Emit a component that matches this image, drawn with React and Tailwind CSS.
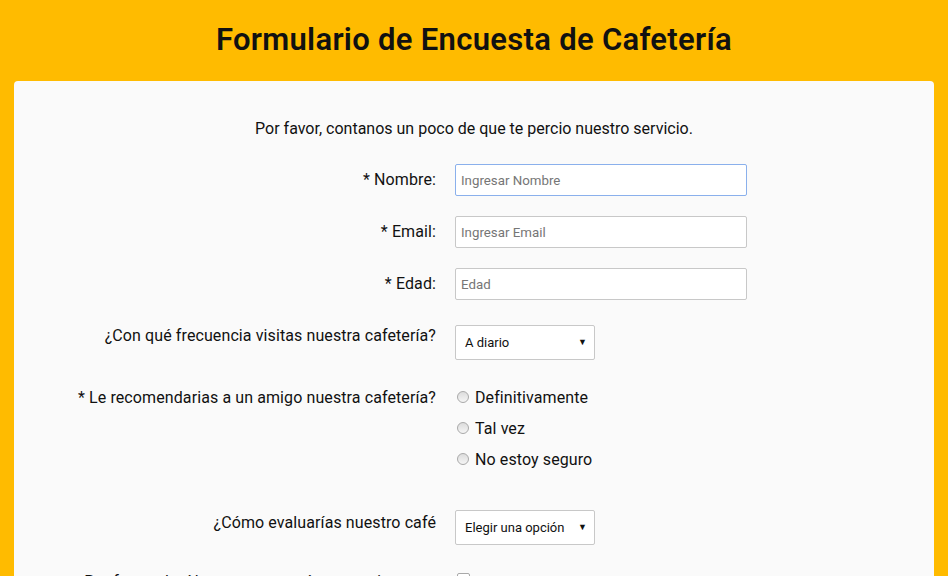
import React from "react";

function Arrow() {
  return (
    <span className="pointer-events-none absolute right-[8px] top-1/2 -translate-y-1/2 text-[9px] text-[#111]">▼</span>
  );
}

export default function App() {
  const font = { fontFamily: "Roboto, 'Noto Sans', sans-serif" };
  const lab = "w-[422px] text-right text-[16px] leading-[20px] tracking-[0.1px]";
  return (
    <div className="min-h-[576px] bg-[#ffbb00] text-[#111]" style={font}>
      <header className="flex h-[81px] items-center justify-center">
        <h1 className="text-[31px] font-semibold tracking-[0.3px] text-[#111]">Formulario de Encuesta de Cafetería</h1>
      </header>
      <main className="mx-[14px] min-h-[495px] rounded-t-[4px] bg-[#fafafa] pt-[38px]">
        <p className="text-center text-[16px] leading-[20px]">Por favor, contanos un poco de que te percio nuestro servicio.</p>

        <div className="mt-[25px] flex items-center gap-[19px]">
          <label className={lab}>* Nombre:</label>
          <input
            className="h-[32px] w-[292px] rounded-[2px] border border-[#8ab0ec] bg-white px-[5px] text-[13.3px] outline-none placeholder:text-[#767676]"
            placeholder="Ingresar Nombre"
          />
        </div>
        <div className="mt-[20px] flex items-center gap-[19px]">
          <label className={lab}>* Email:</label>
          <input
            className="h-[32px] w-[292px] rounded-[2px] border border-[#c8c8c8] bg-white px-[5px] text-[13.3px] outline-none placeholder:text-[#767676]"
            placeholder="Ingresar Email"
          />
        </div>
        <div className="mt-[20px] flex items-center gap-[19px]">
          <label className={lab}>* Edad:</label>
          <input
            className="h-[32px] w-[292px] rounded-[2px] border border-[#c8c8c8] bg-white px-[5px] text-[13.3px] outline-none placeholder:text-[#767676]"
            placeholder="Edad"
          />
        </div>

        <div className="mt-[25px] flex items-start gap-[19px]">
          <label className={`${lab} pt-[1px]`}>¿Con qué frecuencia visitas nuestra cafetería?</label>
          <div className="relative h-[35px] w-[140px]">
            <select className="h-full w-full appearance-none rounded-[2px] border border-[#c8c8c8] bg-white pl-[9px] text-[13px] text-[#111] outline-none">
              <option>A diario</option>
            </select>
            <Arrow />
          </div>
        </div>

        <div className="mt-[28px] flex items-start gap-[19px]">
          <label className={lab}>* Le recomendarias a un amigo nuestra cafetería?</label>
          <div className="flex flex-col gap-[11px]">
            {["Definitivamente", "Tal vez", "No estoy seguro"].map((t) => (
              <label key={t} className="flex items-center gap-[6px] text-[16px] leading-[20px] tracking-[0.1px]">
                <span className="mb-[3px] ml-[2px] inline-block h-[12px] w-[12px] rounded-full border border-[#a9a9a9] bg-gradient-to-b from-[#dcdcdc] to-[#f5f5f5]" />
                {t}
              </label>
            ))}
          </div>
        </div>

        <div className="mt-[40px] flex items-start gap-[19px]">
          <label className={`${lab} pt-[3px]`}>¿Cómo evaluarías nuestro café</label>
          <div className="relative h-[35px] w-[140px]">
            <select className="h-full w-full appearance-none rounded-[2px] border border-[#c8c8c8] bg-white pl-[9px] text-[13px] text-[#111] outline-none">
              <option>Elegir una opción</option>
            </select>
            <Arrow />
          </div>
        </div>

        <div className="mt-[27px] flex items-start gap-[19px]">
          <label className={lab}>Por favor, elegí lo que te gustaría que mejoremos</label>
          <span className="ml-[2px] mt-[1px] inline-block h-[13px] w-[13px] rounded-[2px] border border-[#a9a9a9] bg-white" />
        </div>
      </main>
    </div>
  );
}
